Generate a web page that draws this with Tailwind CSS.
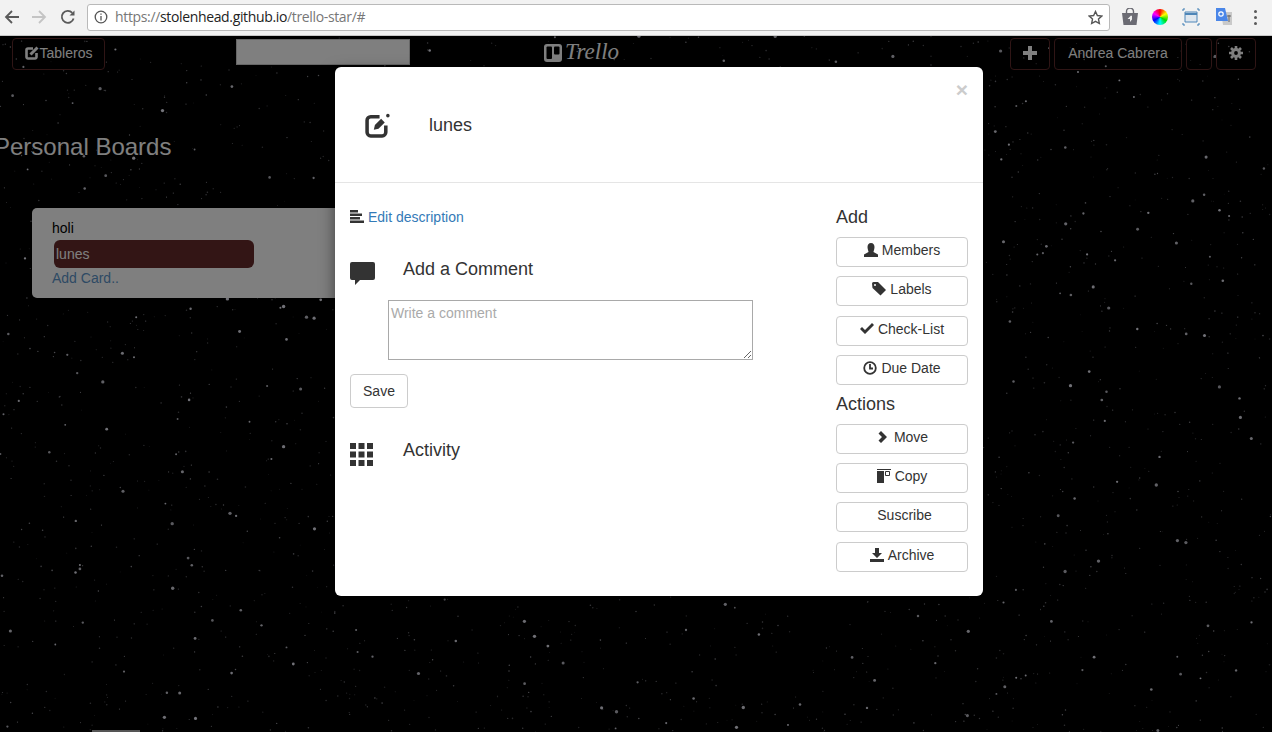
<!DOCTYPE html>
<html lang="en">
<head>
  <meta charset="UTF-8" />
  <title>Trello Star</title>
  <script src="https://cdn.jsdelivr.net/npm/@tailwindcss/browser@4"></script>
</head>
<body class="h-[732px] overflow-hidden bg-black font-['Liberation_Sans',Arial,sans-serif] text-sm text-[#333]">
  <!-- browser toolbar -->
  <div class="flex h-[36px] items-center border-b border-[#c8c8c8] bg-[#f2f2f2] pb-[1px]">
    <svg class="ml-[4px] h-[16px] w-[16px]" viewBox="0 0 16 16" fill="none" stroke="#5a5a5a" stroke-width="1.8"><path d="M15 8H2M8 2 2 8l6 6"/></svg>
    <svg class="ml-[11px] h-[16px] w-[16px]" viewBox="0 0 16 16" fill="none" stroke="#c4c4c4" stroke-width="1.8"><path d="M1 8h13M8 2l6 6-6 6"/></svg>
    <svg class="ml-[13px] h-[16px] w-[16px]" viewBox="0 0 16 16" fill="none" stroke="#5a5a5a" stroke-width="1.8"><path d="M13.6 9.5A6 6 0 1 1 12.3 3.8"/><path d="M14.5 1.5v5h-5z" fill="#5a5a5a" stroke="none"/></svg>
    <div class="ml-[11px] flex h-[27px] w-[1023px] items-center rounded-[3px] border border-[#b9b9b9] bg-white">
      <svg class="ml-[6px] h-[14px] w-[14px]" viewBox="0 0 14 14" fill="none" stroke="#555" stroke-width="1.3"><circle cx="7" cy="7" r="5.8"/><path d="M7 6v4.4M7 3.4v1.4"/></svg>
      <span class="ml-[7px] font-['Open_Sans',sans-serif] text-[14px] tracking-[-0.35px] text-[#777]">https://<span class="text-[#222]">stolenhead.github.io</span>/trello-star/#</span>
      <svg class="mr-[6px] ml-auto h-[15px] w-[15px]" viewBox="0 0 16 16" fill="none" stroke="#555" stroke-width="1.5"><path d="m8 1.6 2 4.3 4.7.6-3.5 3.2.9 4.7L8 12.1l-4.1 2.3.9-4.7L1.3 6.500l4.700-.6z"/></svg>
    </div>
    <svg class="ml-[11px] h-[18px] w-[18px]" viewBox="0 0 18 18"><path d="M1 5h16l-1.500 12h-13z" fill="#6b6b73"/><path d="M5.500 6V3.500a3.500 3.500 0 0 1 7 0V6" fill="none" stroke="#6b6b73" stroke-width="1.4"/><path d="M10 7.500 6.500 11H9v3l2-2.500V8z" fill="#eee"/></svg>
    <div class="ml-[13px] h-[16px] w-[16px] rounded-full bg-[conic-gradient(#f00,#ff0,#0d0,#0ff,#00f,#f0f,#f00)]"></div>
    <svg class="ml-[14px] h-[18px] w-[18px]" viewBox="0 0 18 18" fill="none"><path d="M3 4h12v10H3z" fill="#dfe7ef" stroke="#4e86b8"/><path d="M3 6h12" stroke="#4e86b8" stroke-width="2"/><path d="M1 3V1h2M15 1h2v2M17 15v2h-2M3 17H1v-2" stroke="#3c7cb3"/></svg>
    <svg class="ml-[15px] h-[18px] w-[18px]" viewBox="0 0 18 18"><path d="M6 4h11v13H8z" fill="#c9c9c9"/><path d="M1 0h9l3 13H1z" fill="#4a86e8"/><circle cx="6" cy="6" r="2.200" fill="none" stroke="#fff" stroke-width="1.2"/><path d="M12 8h4M14 7v7" stroke="#666"/></svg>
    <div class="ml-[21px] flex flex-col gap-[3px]">
      <span class="h-[3px] w-[3px] rounded-full bg-[#5a5a5a]"></span>
      <span class="h-[3px] w-[3px] rounded-full bg-[#5a5a5a]"></span>
      <span class="h-[3px] w-[3px] rounded-full bg-[#5a5a5a]"></span>
    </div>
  </div>

  <!-- page under the modal -->
  <div class="relative h-[696px] overflow-hidden">
    <svg id="stars" class="absolute inset-0 h-[696px] w-[1272px]" viewBox="0 0 1272 696"></svg>

    <nav class="relative flex h-[34px] items-start pt-[2px] text-white">
      <button class="ml-[12px] flex h-[32px] w-[93px] items-center justify-center rounded-[4px] border border-[#5e2a2a] pb-[2px] text-sm">
        <svg class="mr-[1px] h-[14px] w-[14px]" viewBox="0 0 14 14" fill="none" stroke="#fff" stroke-width="2.600"><path d="M8 2.500H3A1.500 1.500 0 0 0 1.500 4v7A1.500 1.500 0 0 0 3 12.500h7a1.500 1.500 0 0 0 1.500-1.500V7"/><path d="M5.500 8.500 12.500 1.500" stroke-width="3"/></svg>
        Tableros
      </button>
      <div class="ml-[131px] mt-[1px] h-[26px] w-[174px] border border-[#ccc] bg-white"></div>
      <div class="ml-[134px] mt-[5px] flex w-[76px] items-center text-white">
        <svg class="h-[18px] w-[18px] shrink-0" viewBox="0 0 18 18"><rect width="18" height="18" rx="3" fill="#fff"/><rect x="2.500" y="2.500" width="5.500" height="12.500" rx="1"/><rect x="10" y="2.500" width="5.500" height="8" rx="1"/></svg>
        <span class="ml-[3px] -translate-y-[1px] font-['Liberation_Serif',serif] text-[23px] leading-[20px] italic">Trello</span>
      </div>
      <button class="ml-[390px] flex h-[32px] w-[40px] items-center justify-center rounded-[4px] border border-[#5e2a2a] pb-[2px]">
        <svg class="h-[14px] w-[14px]" viewBox="0 0 14 14" fill="#fff"><path d="M5 0h4v5h5v4H9v5H5V9H0V5h5z"/></svg>
      </button>
      <button class="ml-[4px] h-[32px] w-[128px] rounded-[4px] border border-[#5e2a2a] pb-[2px] text-sm">Andrea Cabrera</button>
      <button class="ml-[4px] h-[32px] w-[26px] rounded-[4px] border border-[#5e2a2a]"></button>
      <button class="ml-[4px] flex h-[32px] w-[40px] items-center justify-center rounded-[4px] border border-[#5e2a2a] pb-[2px]">
        <svg class="h-[14px] w-[14px]" viewBox="0 0 14 14" fill="none" stroke="#fff"><circle cx="7" cy="7" r="3.400" stroke-width="3"/><path d="M7 0v3M7 11v3M0 7h3M11 7h3M2 2l2 2M10 10l2 2M12 2l-2 2M4 10l-2 2" stroke-width="2.600"/></svg>
      </button>
    </nav>

    <h2 class="relative mt-[63px] -ml-[6px] text-[24px] leading-[28px] text-white">Personal Boards</h2>

    <div class="relative mt-[47px] ml-[32px] h-[90px] w-[400px] rounded-[5px] bg-white pt-[12px] pl-[20px] text-black">
      <div class="leading-[16px]">holi</div>
      <div class="mt-[4px] ml-[2px] flex h-[28px] w-[200px] items-center rounded-[6px] bg-[#662a2a] pl-[2px] text-white">lunes</div>
      <a class="block leading-[20px] text-[#5c94c9]" href="#">Add Card..</a>
    </div>

    <div class="absolute bottom-0 left-[92px] h-[2px] w-[48px] bg-[#aaa]"></div>

    <!-- modal -->
    <div class="absolute inset-0 bg-black/50"></div>
    <div class="absolute top-[31px] left-[335px] h-[529px] w-[648px] rounded-[6px] bg-white shadow-[0_5px_15px_rgba(0,0,0,0.5)]">
      <header class="relative flex h-[116px] items-center border-b border-[#e5e5e5] pt-[3px] pl-[30px]">
        <svg class="-translate-y-[1px] h-[26px] w-[26px]" viewBox="0 0 25 25" fill="none" stroke="#333" stroke-width="3.400"><path d="M14 4.500H5.500A3.500 3.500 0 0 0 2 8v11.500A3.500 3.500 0 0 0 5.500 23h11a3.500 3.500 0 0 0 3.500-3.500V13"/><path d="m8.500 17 1-4.500 6-6 3.500 3.500-6 6z" fill="#333" stroke="none"/><circle cx="22" cy="3.500" r="1.700" fill="#333" stroke="none"/></svg>
        <h4 class="ml-[38px] text-[18px] text-[#333]">lunes</h4>
        <span class="absolute top-[8px] right-[15px] text-[21px] font-bold text-[#ccc]">×</span>
      </header>

      <div class="flex">
        <section class="w-[501px] pt-[24px] pl-[15px]">
          <div class="flex h-[20px] items-center">
            <svg class="h-[14px] w-[14px]" viewBox="0 0 14 14" fill="#333"><path d="M0 0h8v2.400H0zM0 3.500h12v2.400H0zM0 7h10v2.400H0zM0 10.500h14v2.400H0z"/></svg>
            <a class="ml-[4px] text-[#337ab7]" href="#">Edit description</a>
          </div>
          <div class="mt-[32px] flex items-center">
            <svg class="h-[24px] w-[25px] translate-y-[3px]" viewBox="0 0 25 24" fill="#333"><path d="M2 0h21a2 2 0 0 1 2 2v14a2 2 0 0 1-2 2H10l-5 5v-5H2a2 2 0 0 1-2-2V2a2 2 0 0 1 2-2z"/></svg>
            <h4 class="ml-[28px] -translate-y-[2px] text-[18px] leading-[20px]">Add a Comment</h4>
          </div>
          <textarea class="mt-[17px] ml-[38px] block h-[60px] w-[365px] border border-[#a9a9a9] px-[2px] py-[2px] text-sm placeholder:text-[#aaa]" placeholder="Write a comment"></textarea>
          <button class="mt-[14px] h-[34px] w-[58px] rounded-[4px] border border-[#ccc] bg-white text-sm">Save</button>
          <div class="mt-[34px] flex items-center">
            <svg class="h-[23px] w-[23px] translate-y-[1px]" viewBox="0 0 23 23" fill="#333"><path d="M0 0h6v6H0zM8.500 0h6v6h-6zM17 0h6v6h-6zM0 8.500h6v6H0zM8.500 8.500h6v6h-6zM17 8.500h6v6h-6zM0 17h6v6H0zM8.500 17h6v6h-6zM17 17h6v6h-6z"/></svg>
            <h4 class="ml-[30px] -translate-y-[4px] text-[18px] leading-[20px]">Activity</h4>
          </div>
        </section>

        <aside class="w-[132px] pt-[24px]">
          <h4 class="text-[18px] leading-[20px]">Add</h4>
          <div class="mt-[10px] flex flex-col gap-[9.330px]">
            <button class="flex h-[30px] items-center justify-center gap-[4px] rounded-[4px] border border-[#ccc] pb-[4px]">
              <svg class="h-[14px] w-[14px]" viewBox="0 0 14 14" fill="#333"><path d="M7 0c2.400 0 3.500 2 3.500 4S9.500 8 9.500 9l4.500 2.500V14H0v-2.500L4.500 9c0-1-1-3-1-5S4.600 0 7 0z"/></svg>
              Members
            </button>
            <button class="flex h-[30px] items-center justify-center gap-[4px] rounded-[4px] border border-[#ccc] pb-[4px]">
              <svg class="h-[14px] w-[14px]" viewBox="0 0 14 14" fill="#333"><path d="M0 1.500A1.500 1.500 0 0 1 1.500 0H6l8 8-5.500 5.500L.5 6z"/><circle cx="3" cy="3" r="1" fill="#fff"/></svg>
              Labels
            </button>
            <button class="flex h-[30px] items-center justify-center gap-[4px] rounded-[4px] border border-[#ccc] pb-[4px]">
              <svg class="h-[14px] w-[14px]" viewBox="0 0 14 14" fill="#333"><path d="m0 7 2-2 3 3 7-7 2 2-9 9z"/></svg>
              Check-List
            </button>
            <button class="flex h-[30px] items-center justify-center gap-[4px] rounded-[4px] border border-[#ccc] pb-[4px]">
              <svg class="h-[14px] w-[14px]" viewBox="0 0 14 14" fill="none" stroke="#333" stroke-width="1.800"><circle cx="7" cy="7" r="5.800"/><path d="M7 3v4.500h3"/></svg>
              Due Date
            </button>
          </div>
          <h4 class="mt-[9px] text-[18px] leading-[20px]">Actions</h4>
          <div class="mt-[10px] flex flex-col">
            <button class="flex h-[30px] items-center justify-center gap-[4px] rounded-[4px] border border-[#ccc] pb-[4px]">
              <svg class="h-[14px] w-[14px]" viewBox="0 0 14 14" fill="#333"><path d="M5 1 11 7l-6 6-2.500-2.500L6 7 2.500 3.500z"/></svg>
              Move
            </button>
            <button class="mt-[9px] flex h-[30px] items-center justify-center gap-[4px] rounded-[4px] border border-[#ccc] pb-[4px]">
              <svg class="h-[14px] w-[14px]" viewBox="0 0 14 14" fill="#333"><path d="M0 0h14v1H0zM0 2h7v12H0z"/><path d="M8.500 2.500h4v4h-4z" fill="none" stroke="#333"/></svg>
              Copy
            </button>
            <button class="mt-[9px] flex h-[30px] items-center justify-center rounded-[4px] border border-[#ccc] pb-[4px] pl-[5px]">Suscribe</button>
            <button class="mt-[10px] flex h-[30px] items-center justify-center gap-[4px] rounded-[4px] border border-[#ccc] pb-[4px]">
              <svg class="h-[14px] w-[14px]" viewBox="0 0 14 14" fill="#333"><path d="M5 0h4v5h3L7 10 2 5h3zM0 11h14v3H0z"/></svg>
              Archive
            </button>
          </div>
        </aside>
      </div>
    </div>
  </div>

  <script>
    // Seeded so the star field comes out the same on every load
    let seed = 20170412;
    function rnd() {
      seed = (seed + 0x6D2B79F5) | 0;
      let t = Math.imul(seed ^ (seed >>> 15), 1 | seed);
      t = (t + Math.imul(t ^ (t >>> 7), 61 | t)) ^ t;
      return ((t ^ (t >>> 14)) >>> 0) / 4294967296;
    }

    const svg = document.getElementById('stars');
    let stars = '';
    for (let i = 0; i < 2600; i++) {
      const big = rnd() < 0.14;
      const r = big ? 0.9 + rnd() * 0.8 : 0.4 + rnd() * 0.4;
      const o = big ? 0.75 + rnd() * 0.25 : 0.25 + rnd() * 0.4;
      stars += `<circle cx="${(rnd() * 1272).toFixed(1)}" cy="${(rnd() * 696).toFixed(1)}" r="${r.toFixed(2)}" fill="#e8e8f4" opacity="${o.toFixed(2)}"/>`;
    }
    svg.innerHTML = stars;
  </script>
</body>
</html>
